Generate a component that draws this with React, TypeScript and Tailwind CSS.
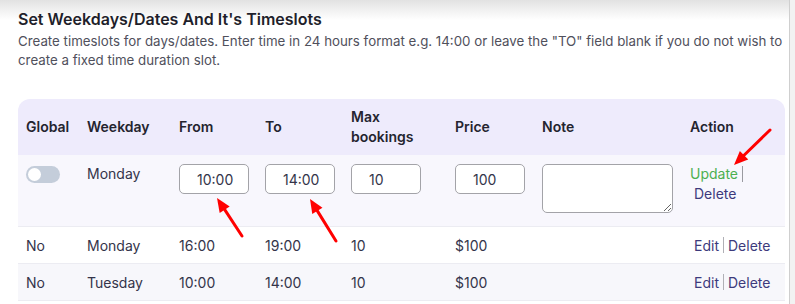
import React from 'react'

const cols = 'grid grid-cols-[61px_92px_86px_86px_104px_87px_148px_103px]'

const rows = [
  { global: 'No', day: 'Monday', from: '16:00', to: '19:00', max: '10', price: '$100', bg: 'bg-white' },
  { global: 'No', day: 'Tuesday', from: '10:00', to: '14:00', max: '10', price: '$100', bg: 'bg-[#f7f7fb]' },
]

function Field({ value }: { value: string }) {
  return (
    <input
      defaultValue={value}
      className="h-[30px] w-[70px] rounded-[5px] border border-[#a3a3a8] bg-white pl-[17px] text-[14px] text-[#34344a] outline-none"
    />
  )
}

function Arrow({ x1, y1, x2, y2 }: { x1: number; y1: number; x2: number; y2: number }) {
  const a = Math.atan2(y2 - y1, x2 - x1)
  const len = 14
  const w = 6
  const bx = x2 - Math.cos(a) * len
  const by = y2 - Math.sin(a) * len
  const p1 = `${bx + Math.sin(a) * w},${by - Math.cos(a) * w}`
  const p2 = `${bx - Math.sin(a) * w},${by + Math.cos(a) * w}`
  return (
    <g>
      <line x1={x1} y1={y1} x2={bx} y2={by} stroke="#ff0000" strokeWidth={3} strokeLinecap="round" />
      <polygon points={`${x2},${y2} ${p1} ${p2}`} fill="#ff0000" />
    </g>
  )
}

export default function App() {
  return (
    <div className="relative flex h-[304px] w-[795px] overflow-hidden bg-[#f2f2f2] font-['Inter',sans-serif]">
      <div className="h-full w-[790px] border-r border-[#cfcfcf] bg-[linear-gradient(to_bottom,#e2e2e2,#ffffff_20px)] pl-[18px] pr-[5px] pt-[7px]">
        <h2 className="text-[16px] font-semibold leading-6 text-[#1f1f2b]">Set Weekdays/Dates And It's Timeslots</h2>
        <p className="mt-[1px] text-[13.3px] leading-[19px] text-[#50505c]">
          Create timeslots for days/dates. Enter time in 24 hours format e.g. 14:00 or leave the "TO" field blank if you do not wish to create a fixed time duration slot.
        </p>

        <div className="mt-[29px] w-[767px] overflow-hidden rounded-t-[12px] text-[14px] text-[#34344a]">
          <div className={`${cols} h-[56px] items-center bg-[#eeebfc] font-semibold leading-5 text-[#24242f]`}>
            <div className="pl-2">Global</div>
            <div className="pl-2">Weekday</div>
            <div className="pl-2">From</div>
            <div className="pl-2">To</div>
            <div className="pl-2">Max<br />bookings</div>
            <div className="pl-2">Price</div>
            <div className="pl-2">Note</div>
            <div className="pl-2">Action</div>
          </div>

          <div className={`${cols} h-[72px] border-b border-[#ececf2] bg-[#f8f7fd] pt-[9px]`}>
            <div className="pl-2 pt-[2px]">
              <div className="flex h-[17px] w-[34px] items-center rounded-full bg-[#c4cdda] px-[2px]">
                <div className="h-[13px] w-[13px] rounded-full bg-white" />
              </div>
            </div>
            <div className="pl-2 leading-5">Monday</div>
            <div className="pl-2"><Field value="10:00" /></div>
            <div className="pl-2"><Field value="14:00" /></div>
            <div className="pl-2"><Field value="10" /></div>
            <div className="pl-2"><Field value="100" /></div>
            <div className="pl-2">
              <textarea className="h-[49px] w-[131px] rounded-[5px] border border-[#a3a3a8] bg-white outline-none" />
            </div>
            <div className="pl-2 leading-5">
              <div className="flex items-center">
                <span className="text-[#4cb050]">Update</span>
                <span className="ml-[4px] h-[16px] w-px bg-[#9a9aa0]" />
              </div>
              <div className="pl-[4px] text-[#3d3a7c]">Delete</div>
            </div>
          </div>

          {rows.map((r) => (
            <div key={r.day} className={`${cols} h-[37px] items-center border-b border-[#ececf2] ${r.bg}`}>
              <div className="pl-2">{r.global}</div>
              <div className="pl-2">{r.day}</div>
              <div className="pl-2">{r.from}</div>
              <div className="pl-2">{r.to}</div>
              <div className="pl-2">{r.max}</div>
              <div className="pl-2">{r.price}</div>
              <div className="pl-2" />
              <div className="flex items-center pl-3 text-[#3d3a7c]">
                <span>Edit</span>
                <span className="mx-[4px] h-[16px] w-px bg-[#b0b0b6]" />
                <span>Delete</span>
              </div>
            </div>
          ))}
        </div>
      </div>

      <svg className="pointer-events-none absolute left-0 top-0" width={795} height={304}>
        <Arrow x1={242} y1={236} x2={217} y2={198} />
        <Arrow x1={336} y1={241} x2={310} y2={199} />
        <Arrow x1={770} y1={130} x2={734} y2={165} />
      </svg>
    </div>
  )
}
